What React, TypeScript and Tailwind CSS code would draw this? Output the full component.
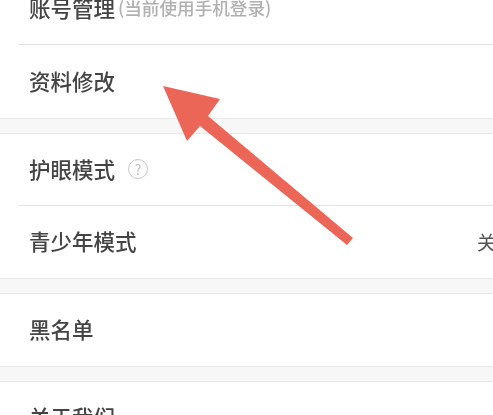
const font = { fontFamily: '"Noto Sans CJK SC", "Noto Sans", sans-serif' };

function Row({ children, divider = false, tall = false }: { children: React.ReactNode; divider?: boolean; tall?: boolean }) {
  return (
    <div className={`relative flex items-center pb-[2px] pl-[29px] text-[21.5px] font-medium leading-none text-[#444444] ${tall ? "h-[73px]" : "h-[72px]"}`}>
      {children}
      {divider && <div className="absolute bottom-0 left-[18px] right-0 h-px bg-[#e2e2e2]" />}
    </div>
  );
}

function Gap() {
  return <div className="h-[16px] border-y border-[#e8e8e8] bg-[#f7f7f7]" />;
}

export default function App() {
  return (
    <div className="relative h-[415px] w-[493px] overflow-hidden bg-white blur-[0.4px]" style={font}>
      <div className="-mt-[28px]">
        <Row divider tall>
          <span>账号管理</span>
          <span className="ml-[3px] text-[17.6px] font-medium text-[#b0b0b0]">(当前使用手机登录)</span>
        </Row>
        <Row tall>资料修改</Row>
        <Gap />
        <Row divider>
          <span>护眼模式</span>
          <span className="ml-[13px] flex h-[20px] w-[20px] items-center justify-center rounded-full border border-[#c8c8c8] text-[14px] font-normal text-[#c0c0c0]">?</span>
        </Row>
        <Row>
          <span>青少年模式</span>
          <span className="absolute left-[477px] text-[19px] font-normal text-[#555555]">关</span>
        </Row>
        <Gap />
        <Row>黑名单</Row>
        <Gap />
        <Row>关于我们</Row>
      </div>
      <svg className="absolute left-0 top-0" width="493" height="415" viewBox="0 0 493 415">
        <polygon
          points="163,86 220,99 208,116 353,238 347,245 200,126 187,141"
          fill="#ec6657"
        />
      </svg>
    </div>
  );
}
